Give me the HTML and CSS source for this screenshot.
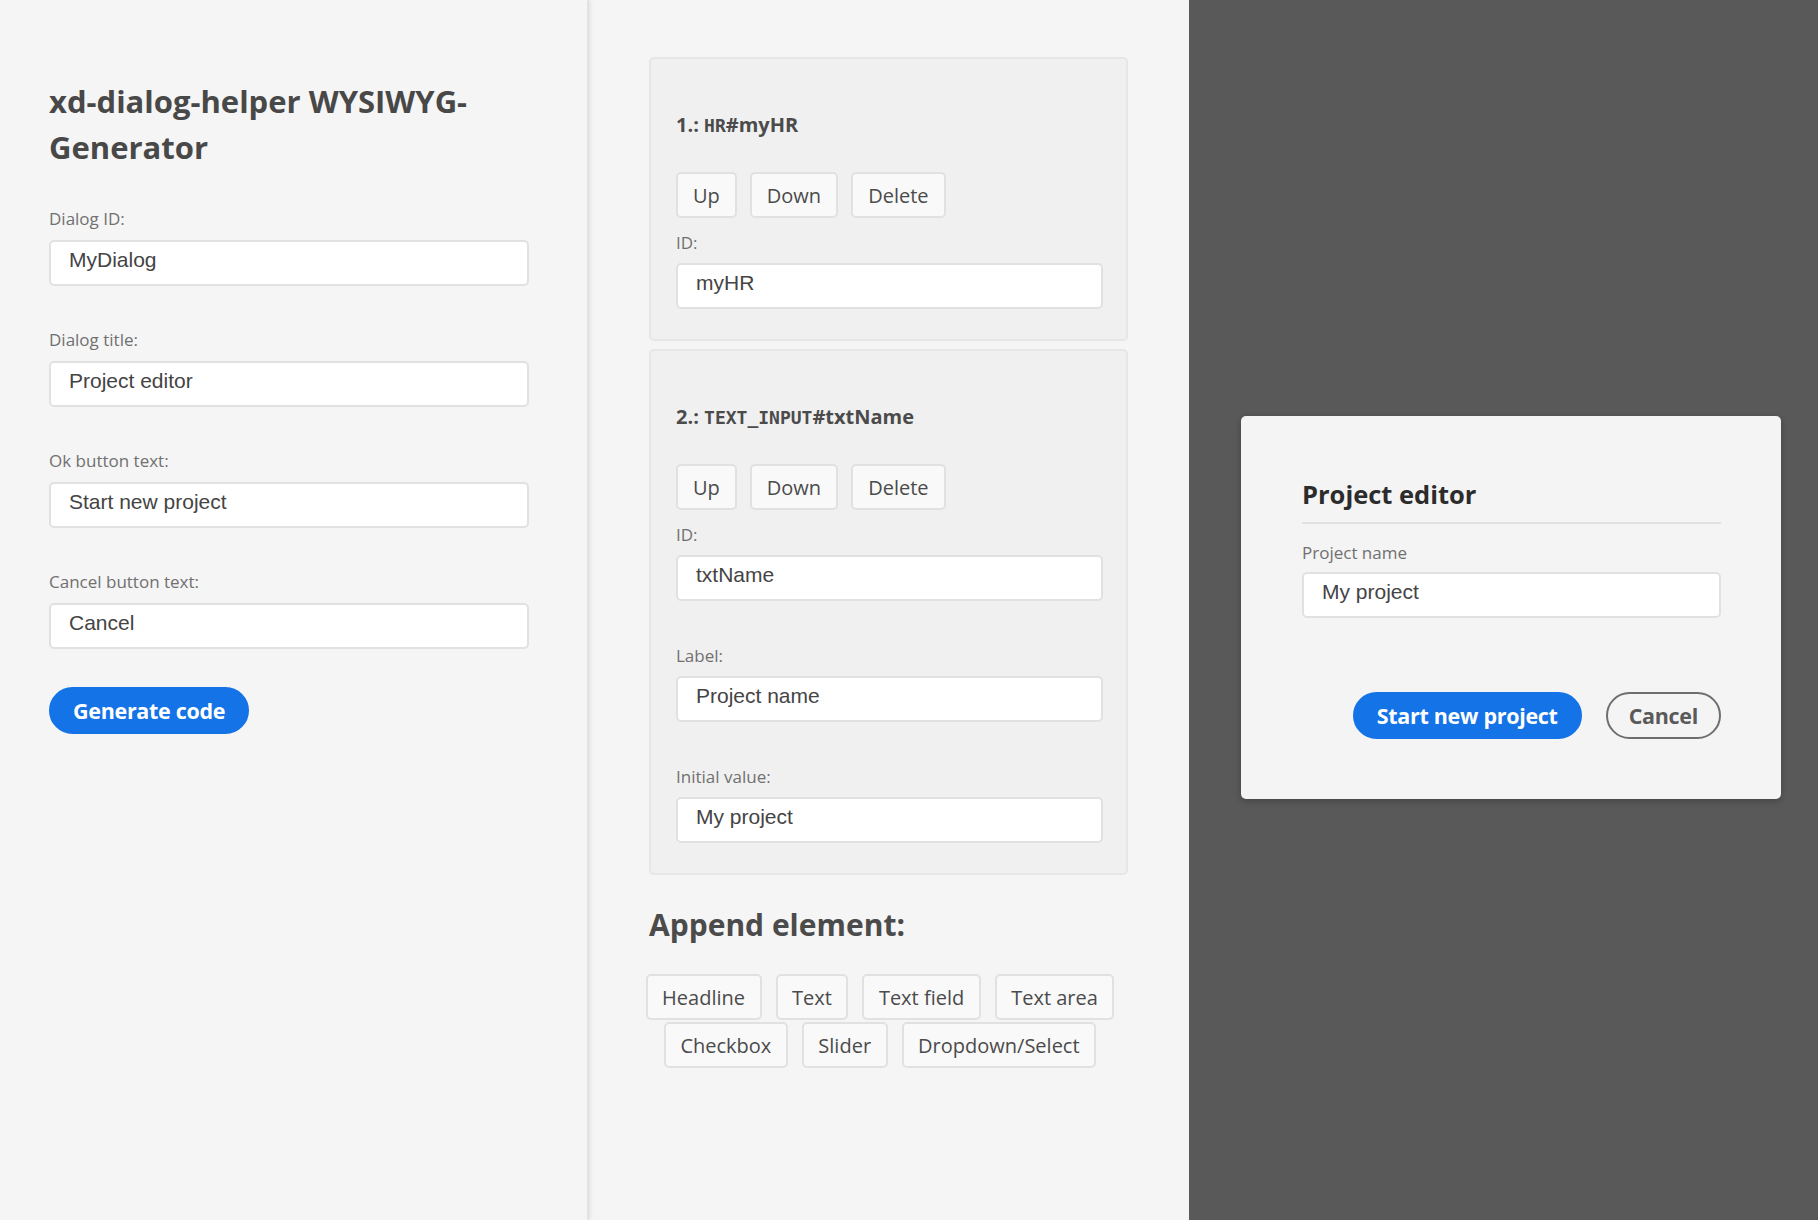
FILE: index.html
```html
<!DOCTYPE html>
<html lang="en">
<head>
<meta charset="utf-8">
<title>xd-dialog-helper WYSIWYG-Generator</title>
<link rel="stylesheet" href="styles.css">
</head>
<body>
<div class="app">
  <aside class="settings">
    <h1 class="title">xd-dialog-helper WYSIWYG-Generator</h1>
    <div class="field">
      <label class="label">Dialog ID:</label>
      <div class="input">MyDialog</div>
    </div>
    <div class="field">
      <label class="label">Dialog title:</label>
      <div class="input">Project editor</div>
    </div>
    <div class="field">
      <label class="label">Ok button text:</label>
      <div class="input">Start new project</div>
    </div>
    <div class="field">
      <label class="label">Cancel button text:</label>
      <div class="input">Cancel</div>
    </div>
    <button class="cta">Generate code</button>
  </aside>

  <main class="elements">
    <section class="card">
      <h3 class="card-title">1.: <code>HR</code>#myHR</h3>
      <div class="actions">
        <button class="btn">Up</button>
        <button class="btn">Down</button>
        <button class="btn">Delete</button>
      </div>
      <div class="field field-first">
        <label class="label">ID:</label>
        <div class="input">myHR</div>
      </div>
    </section>

    <section class="card">
      <h3 class="card-title">2.: <code>TEXT_INPUT</code>#txtName</h3>
      <div class="actions">
        <button class="btn">Up</button>
        <button class="btn">Down</button>
        <button class="btn">Delete</button>
      </div>
      <div class="field field-first">
        <label class="label">ID:</label>
        <div class="input">txtName</div>
      </div>
      <div class="field">
        <label class="label">Label:</label>
        <div class="input">Project name</div>
      </div>
      <div class="field">
        <label class="label">Initial value:</label>
        <div class="input">My project</div>
      </div>
    </section>

    <h2 class="append-title">Append element:</h2>
    <div class="append">
      <div class="append-row">
        <button class="btn">Headline</button>
        <button class="btn">Text</button>
        <button class="btn">Text field</button>
        <button class="btn">Text area</button>
      </div>
      <div class="append-row">
        <button class="btn">Checkbox</button>
        <button class="btn">Slider</button>
        <button class="btn">Dropdown/Select</button>
      </div>
    </div>
  </main>

  <section class="preview">
    <div class="dialog">
      <h2 class="dialog-title">Project editor</h2>
      <hr class="dialog-rule">
      <div class="dialog-field">
        <label class="label">Project name</label>
        <div class="input">My project</div>
      </div>
      <div class="dialog-footer">
        <button class="cta">Start new project</button>
        <button class="secondary">Cancel</button>
      </div>
    </div>
  </section>
</div>
</body>
</html>
```

FILE: styles.css
```css
* { box-sizing: border-box; }

html, body {
  margin: 0;
  padding: 0;
  height: 100%;
}

body {
  font-family: "Open Sans", "Noto Sans", sans-serif;
  color: #4b4b4b;
  background: #f5f5f5;
}

.app {
  display: flex;
  height: 1220px;
}

/* ---------- left column ---------- */
.settings {
  width: 588px;
  flex: none;
  background: #f5f5f5;
  padding: 78px 0 0 49px;
  border-right: 1px solid #e2e2e2;
  box-shadow: 2px 0 4px rgba(0, 0, 0, 0.10);
  position: relative;
  z-index: 1;
}

.title {
  margin: 0;
  width: 480px;
  font-size: 31px;
  line-height: 46px;
  font-weight: 700;
  color: #484848;
}

.field {
  display: flex;
  flex-direction: column;
  margin-top: 42px;
}

.settings .field:first-of-type {
  margin-top: 37px;
}

.settings .field {
  width: 480px;
}

.label {
  display: block;
  font-size: 17px;
  line-height: 24px;
  color: #707070;
  margin-bottom: 9px;
}

.input {
  height: 46px;
  background: #ffffff;
  border: 2px solid #e1e1e1;
  border-radius: 5px;
  padding: 0 18px 6px;
  display: flex;
  align-items: center;
  font-family: "Liberation Sans", Arial, sans-serif;
  font-size: 21px;
  color: #444444;
}

.cta {
  display: inline-flex;
  align-items: center;
  height: 47px;
  padding: 0 22px;
  border: 2px solid #1473e6;
  border-radius: 24px;
  background: #1473e6;
  color: #ffffff;
  font-family: "Open Sans", sans-serif;
  font-size: 21.5px;
  font-weight: 700;
  letter-spacing: -0.3px;
}

.settings .cta {
  margin-top: 38px;
}

/* ---------- middle column ---------- */
.elements {
  width: 601px;
  flex: none;
  padding: 57px 0 0 61px;
  background: #f5f5f5;
}

.card {
  width: 479px;
  background: #f0f0f0;
  border: 2px solid #e6e6e6;
  border-radius: 5px;
  padding: 53px 23px 30px 25px;
}

.card + .card {
  margin-top: 8px;
}

.card .label {
  margin-bottom: 8px;
}

.card .field + .field {
  margin-top: 43px;
}

.card-title {
  margin: 0;
  font-size: 20px;
  line-height: 26px;
  font-weight: 700;
  color: #4b4b4b;
}

.card-title code {
  font-family: "DejaVu Sans Mono", "Liberation Mono", monospace;
  font-size: 18px;
  font-weight: 700;
}

.actions {
  display: flex;
  gap: 13px;
  margin-top: 33px;
}

.btn {
  flex: none;
  height: 46px;
  padding: 0 15px;
  background: #f9f9f9;
  border: 2px solid #e1e1e1;
  border-radius: 5px;
  font-family: "Open Sans", sans-serif;
  font-size: 20px;
  color: #4b4b4b;
  white-space: nowrap;
}

.field-first {
  margin-top: 13px;
}

.append-title {
  margin: 30px 0 0;
  font-size: 30px;
  line-height: 40px;
  font-weight: 700;
  color: #4b4b4b;
}

.append {
  width: 479px;
  padding-right: 17px;
  margin-top: 29px;
  display: flex;
  flex-direction: column;
  gap: 2px;
}

.append-row {
  display: flex;
  justify-content: center;
  gap: 14px;
}

.append .btn {
  padding: 0 14.5px;
}

/* ---------- right column ---------- */
.preview {
  flex: 1;
  background: #595959;
  display: flex;
  align-items: center;
  padding: 0 0 6px 52px;
}

.dialog {
  width: 540px;
  background: #f4f4f4;
  border-radius: 5px;
  padding: 60px 60px 60px 61px;
  box-shadow: 0 2px 6px rgba(0, 0, 0, 0.25);
}

.dialog-title {
  margin: 0;
  font-size: 25.5px;
  line-height: 36px;
  font-weight: 700;
  color: #2c2c2c;
}

.dialog-rule {
  margin: 10px 0 0;
  height: 2px;
  border: 0;
  background: #e1e1e1;
}

.dialog-field {
  margin-top: 17px;
}

.dialog-field .label {
  margin-bottom: 7px;
}

.dialog-footer {
  margin-top: 74px;
  display: flex;
  justify-content: flex-end;
  gap: 24px;
}

.secondary {
  height: 47px;
  padding: 0 21px;
  background: transparent;
  border: 2px solid #6e6e6e;
  border-radius: 24px;
  font-family: "Open Sans", sans-serif;
  font-size: 21.5px;
  font-weight: 700;
  color: #5a5a5a;
  letter-spacing: -0.3px;
}
```
